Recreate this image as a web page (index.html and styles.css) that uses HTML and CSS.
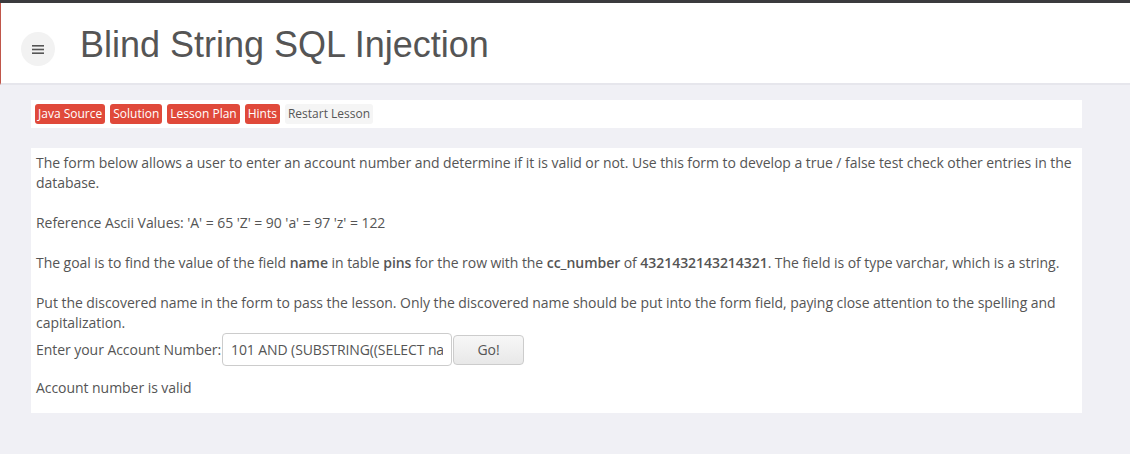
FILE: index.html
```html
<!DOCTYPE html>
<html lang="en">
<head>
  <meta charset="UTF-8">
  <title>Blind String SQL Injection</title>
  <link rel="stylesheet" href="styles.css">
</head>
<body>

  <div class="header">
    <button class="menu-btn" type="button" aria-label="menu">
      <svg width="12" height="9" viewBox="0 0 12 9">
        <rect x="0" y="0" width="12" height="1.6" fill="#555"/>
        <rect x="0" y="3.7" width="12" height="1.6" fill="#555"/>
        <rect x="0" y="7.4" width="12" height="1.6" fill="#555"/>
      </svg>
    </button>
    <h1 class="title">Blind String SQL Injection</h1>
  </div>

  <div class="main">
    <div class="lesson-bar">
      <span class="lesson-btn">Java Source</span>
      <span class="lesson-btn">Solution</span>
      <span class="lesson-btn">Lesson Plan</span>
      <span class="lesson-btn">Hints</span>
      <span class="lesson-btn restart">Restart Lesson</span>
    </div>

    <div class="lesson-content">
      <p>The form below allows a user to enter an account number and determine if it is valid or not. Use this form to develop a true / false test check other entries in the database.</p>
      <p>Reference Ascii Values: 'A' = 65 'Z' = 90 'a' = 97 'z' = 122</p>
      <p>The goal is to find the value of the field <b>name</b> in table <b>pins</b> for the row with the <b>cc_number</b> of <b>4321432143214321</b>. The field is of type varchar, which is a string.</p>
      <p class="last">Put the discovered name in the form to pass the lesson. Only the discovered name should be put into the form field, paying close attention to the spelling and capitalization.</p>

      <form class="account-form">
        <label for="account">Enter your Account Number:</label>
        <input type="text" id="account" value="101 AND (SUBSTRING((SELECT name FROM pins WHERE cc_number='4321432143214321'), 1, 1) &lt; 'H' );">
        <button type="button" class="go-btn">Go!</button>
      </form>

      <p class="result">Account number is valid</p>
    </div>
  </div>

</body>
</html>
```

FILE: styles.css
```css
body {
  margin: 0;
  background-color: #f0f0f5;
  font-family: 'Open Sans', sans-serif;
  color: #555;
  border-top: 3px solid #3b3b3e;
}
.header {
  background-color: #fff;
  height: 80px;
  border-left: 1px solid #c0564a;
  border-bottom: 2px solid #e6e6ec;
  display: flex;
  align-items: center;
}
.menu-btn {
  width: 34px;
  height: 34px;
  margin-left: 20px;
  margin-top: 12px;
  border: none;
  border-radius: 50%;
  background-color: #f2f2f2;
  display: flex;
  align-items: center;
  justify-content: center;
  padding: 0;
}
.title {
  margin: 3px 0 0 25px;
  font-family: 'Liberation Sans', Arial, sans-serif;
  font-weight: normal;
  font-size: 36px;
  color: #555;
}
.main {
  padding: 15px 48px 40px 31px;
}
.lesson-bar {
  background-color: #fff;
  padding: 4px;
  display: flex;
  gap: 5px;
  height: 20px;
}
.lesson-btn {
  background-color: #e0493a;
  color: #fff;
  font-size: 12px;
  line-height: 20px;
  padding: 0 3px;
  border-radius: 3px;
}
.lesson-btn.restart {
  background-color: #f5f5f5;
  color: #555;
}
.lesson-content {
  background-color: #fff;
  margin-top: 20px;
  padding: 5px 5px 15px 5px;
  font-size: 14px;
  line-height: 20px;
  letter-spacing: -0.05px;
}
.lesson-content p {
  margin: 0 0 20px 0;
}
.lesson-content p.last {
  margin-bottom: 0;
}
.lesson-content b {
  font-weight: 600;
}
.account-form {
  display: flex;
  align-items: center;
}
.account-form label {
  margin-right: 1px;
}
.account-form input {
  width: 212px;
  height: 31px;
  padding: 0 8px;
  border: 1px solid #ccc;
  border-radius: 4px;
  font-family: 'Open Sans', sans-serif;
  font-size: 14px;
  letter-spacing: -0.1px;
  color: #555;
  box-sizing: content-box;
}
.go-btn {
  width: 71px;
  height: 30px;
  margin-left: 1px;
  border: 1px solid #ccc;
  border-radius: 4px;
  background: linear-gradient(#f7f7f7, #e8e8e8);
  font-family: 'Open Sans', sans-serif;
  font-size: 14px;
  color: #555;
}
.lesson-content p.result {
  margin: 12px 0 0 0;
}
```
